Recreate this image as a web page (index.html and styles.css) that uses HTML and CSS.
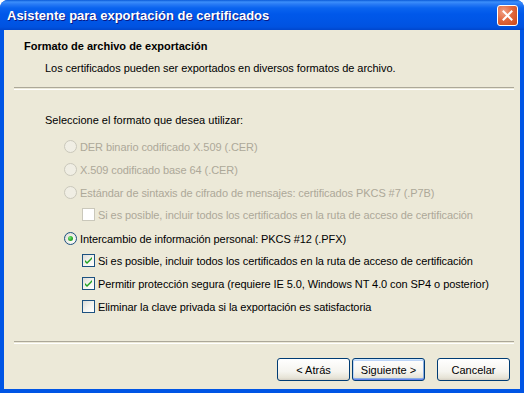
FILE: index.html
```html
<!DOCTYPE html>
<html lang="es">
<head>
<meta charset="utf-8">
<title>Asistente para exportación de certificados</title>
<link rel="stylesheet" href="styles.css">
</head>
<body>
<div class="window">
  <div class="titlebar">
    <span class="title">Asistente para exportación de certificados</span>
    <button class="close" aria-label="Cerrar">
      <svg width="13" height="13" viewBox="0 0 13 13"><path d="M2.5 2.5 L10.5 10.5 M10.5 2.5 L2.5 10.5" stroke="#fff" stroke-width="2" stroke-linecap="square"/></svg>
    </button>
  </div>
  <div class="client">
    <div class="header">
      <div class="h-title">Formato de archivo de exportación</div>
      <div class="h-sub">Los certificados pueden ser exportados en diversos formatos de archivo.</div>
    </div>
    <div class="sep"></div>
    <div class="content">
      <div class="prompt">Seleccione el formato que desea utilizar:</div>
      <div class="options">
        <div class="row radio-row disabled"><span class="radio"></span><span>DER binario codificado X.509 (.CER)</span></div>
        <div class="row radio-row disabled"><span class="radio"></span><span>X.509 codificado base 64 (.CER)</span></div>
        <div class="row radio-row disabled"><span class="radio"></span><span>Estándar de sintaxis de cifrado de mensajes: certificados PKCS #7 (.P7B)</span></div>
        <div class="row check-row disabled sub-a"><span class="check"></span><span>Si es posible, incluir todos los certificados en la ruta de acceso de certificación</span></div>
        <div class="row radio-row sub-b"><span class="radio on"></span><span>Intercambio de información personal: PKCS #12 (.PFX)</span></div>
        <div class="row check-row sub-a"><span class="check on"><svg width="11" height="11" viewBox="0 0 11 11"><path d="M2 5 L4 7 L9 2 L9 4 L4 9 L2 7 Z" fill="#21a121"/></svg></span><span>Si es posible, incluir todos los certificados en la ruta de acceso de certificación</span></div>
        <div class="row check-row"><span class="check on"><svg width="11" height="11" viewBox="0 0 11 11"><path d="M2 5 L4 7 L9 2 L9 4 L4 9 L2 7 Z" fill="#21a121"/></svg></span><span>Permitir protección segura (requiere IE 5.0, Windows NT 4.0 con SP4 o posterior)</span></div>
        <div class="row check-row"><span class="check"></span><span>Eliminar la clave privada si la exportación es satisfactoria</span></div>
      </div>
    </div>
    <div class="sep"></div>
    <div class="buttons">
      <button class="btn">&lt; Atrás</button>
      <button class="btn default">Siguiente &gt;</button>
      <button class="btn cancel">Cancelar</button>
    </div>
  </div>
</div>
</body>
</html>
```
FILE: styles.css
```css
html, body {
  margin: 0;
  padding: 0;
  background: #ffffff;
}
.window {
  width: 524px;
  height: 393px;
  box-sizing: border-box;
  display: flex;
  flex-direction: column;
  background: #0055e5;
  border-radius: 8px 8px 0 0;
  overflow: hidden;
  font-family: "Liberation Sans", Arial, sans-serif;
  font-size: 11px;
  color: #000;
}
.titlebar {
  height: 30px;
  flex: none;
  display: flex;
  align-items: center;
  justify-content: space-between;
  padding: 0 6px 0 7px;
  background: linear-gradient(to bottom, #0a5ad8 0px, #3c8ffb 2px, #2a7cf5 4px, #0a64ef 8px, #0058ea 14px, #0055e5 22px, #0052e0 27px, #0046cc 30px);
  box-sizing: border-box;
}
.title {
  color: #fff;
  font-family: "Liberation Sans", Arial, sans-serif;
  font-weight: bold;
  font-size: 13px;
  text-shadow: 1px 1px 0 #0a1883;
  white-space: nowrap;
}
.close {
  width: 21px;
  height: 21px;
  padding: 0;
  margin: 0;
  border: 1px solid #fff;
  border-radius: 3px;
  background: radial-gradient(circle at 30% 30%, #f0a085 0%, #e2693f 45%, #cc4616 100%);
  display: flex;
  align-items: center;
  justify-content: center;
  box-sizing: border-box;
}
.client {
  flex: 1;
  margin: 0 4px 4px 4px;
  background: #ece9d8;
  display: flex;
  flex-direction: column;
}
.header {
  height: 57px;
  box-sizing: border-box;
  padding: 10px 0 0 20px;
}
.h-title {
  font-weight: bold;
  line-height: 13px;
}
.h-sub {
  margin-top: 9px;
  padding-left: 21px;
  line-height: 13px;
  letter-spacing: -0.05px;
}
.sep {
  margin: 0 6px 0 10px;
  height: 1px;
  border-top: 1px solid #aca899;
  border-bottom: 1px solid #ffffff;
  flex: none;
}
.content {
  height: 251px;
  box-sizing: border-box;
  padding: 24px 0 0 41px;
}
.prompt {
  line-height: 13px;
}
.options {
  margin-top: 8px;
  display: flex;
  flex-direction: column;
}
.row {
  height: 23px;
  display: flex;
  align-items: center;
  white-space: nowrap;
  letter-spacing: -0.08px;
}
.row.sub-a {
  margin-top: -1px;
}
.row.sub-b {
  margin-top: 1px;
}
.radio-row {
  padding-left: 19px;
}
.check-row {
  padding-left: 37px;
}
.disabled {
  color: #aca899;
}
.radio {
  width: 13px;
  height: 13px;
  box-sizing: border-box;
  border-radius: 50%;
  border: 1px solid #1c5180;
  background: radial-gradient(circle at 65% 65%, #ffffff 0%, #f2f1ec 40%, #d8d6cc 100%);
  margin-right: 3px;
  flex: none;
  display: flex;
  align-items: center;
  justify-content: center;
}
.disabled .radio {
  border-color: #cac8bb;
  background: #f0eee4;
}
.radio.on::after {
  content: "";
  width: 5px;
  height: 5px;
  border-radius: 50%;
  background: radial-gradient(circle at 35% 35%, #7de77d 0%, #31b131 50%, #1a8a1a 100%);
}
.check {
  width: 13px;
  height: 13px;
  box-sizing: border-box;
  border: 1px solid #1c5180;
  background: linear-gradient(135deg, #dcdcd7 0%, #f4f3ee 50%, #ffffff 100%);
  margin-right: 3px;
  flex: none;
  display: flex;
  align-items: center;
  justify-content: center;
}
.disabled .check {
  border-color: #cac8bb;
  background: #ffffff;
}
.buttons {
  display: flex;
  padding: 14px 0 0 273px;
}
.btn {
  width: 73px;
  height: 23px;
  margin: 0;
  padding: 0;
  box-sizing: border-box;
  border: 1px solid #003c74;
  border-radius: 3px;
  background: linear-gradient(to bottom, #ffffff 0%, #f5f4ef 60%, #e6e3d6 90%, #d6d0c5 100%);
  font-family: "Liberation Sans", Arial, sans-serif;
  font-size: 11px;
  color: #000;
}
.btn + .btn {
  margin-left: 2px;
}
.btn.default {
  box-shadow: inset 0 1px 0 #cee7ff, inset 0 -1px 0 #6982ee, inset 1px 0 0 #bcd4f6, inset -1px 0 0 #89ade4, inset 0 2px 0 #bcd4f6, inset 0 -2px 0 #89ade4;
}
.btn.cancel {
  margin-left: 12px;
}
```
